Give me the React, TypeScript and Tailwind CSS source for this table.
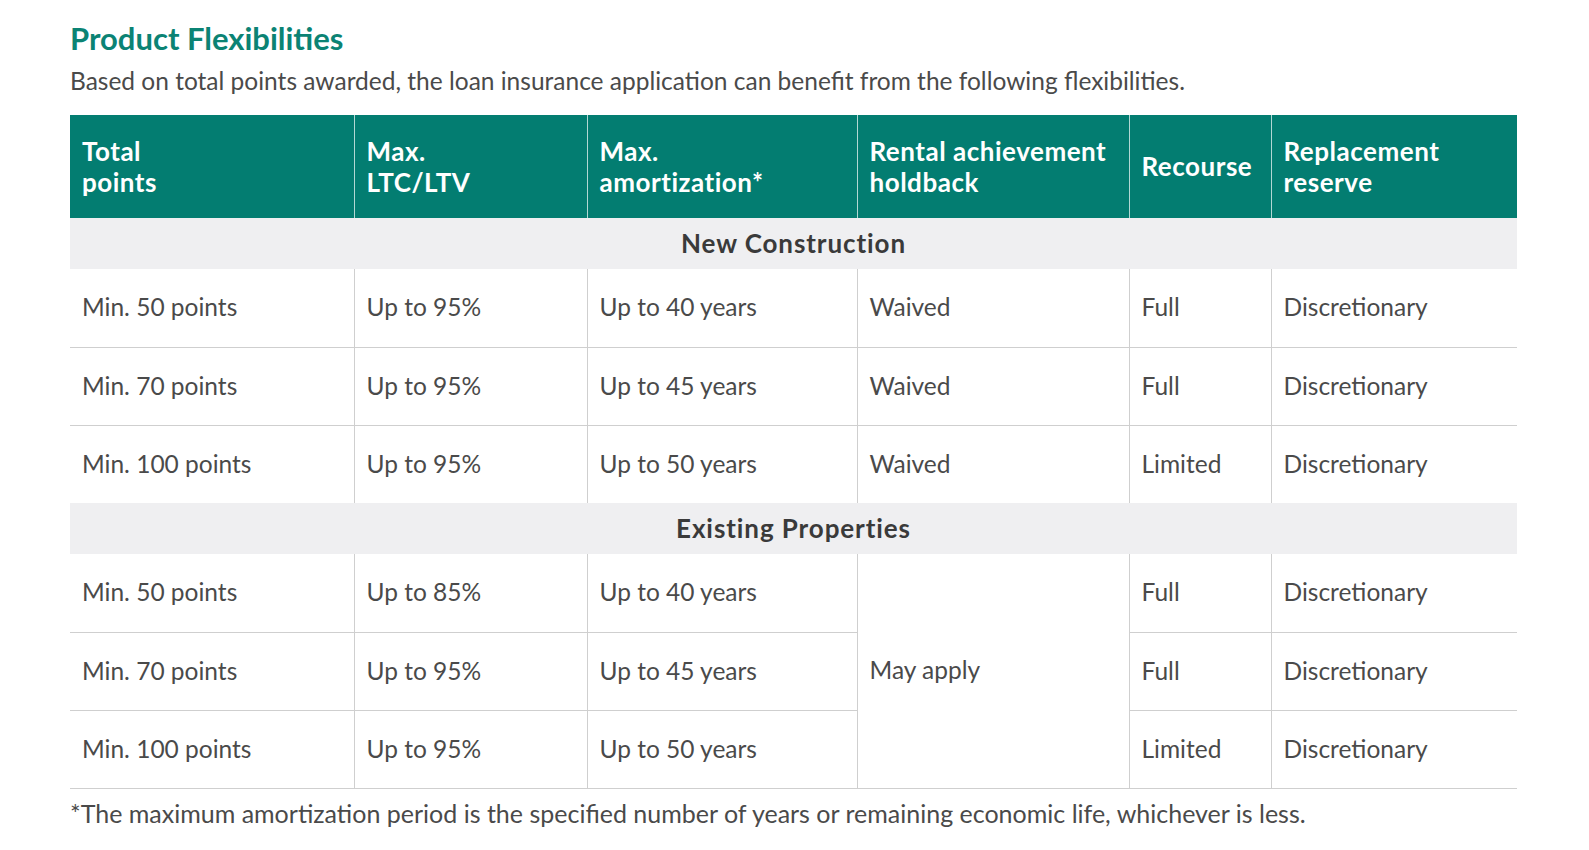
import React from 'react';

type Row = {
  points: string;
  ltv: string;
  amort: string;
  holdback?: string;
  recourse: string;
  reserve: string;
};

const newConstruction: Row[] = [
  { points: 'Min. 50 points', ltv: 'Up to 95%', amort: 'Up to 40 years', holdback: 'Waived', recourse: 'Full', reserve: 'Discretionary' },
  { points: 'Min. 70 points', ltv: 'Up to 95%', amort: 'Up to 45 years', holdback: 'Waived', recourse: 'Full', reserve: 'Discretionary' },
  { points: 'Min. 100 points', ltv: 'Up to 95%', amort: 'Up to 50 years', holdback: 'Waived', recourse: 'Limited', reserve: 'Discretionary' },
];

const existing: Row[] = [
  { points: 'Min. 50 points', ltv: 'Up to 85%', amort: 'Up to 40 years', recourse: 'Full', reserve: 'Discretionary' },
  { points: 'Min. 70 points', ltv: 'Up to 95%', amort: 'Up to 45 years', recourse: 'Full', reserve: 'Discretionary' },
  { points: 'Min. 100 points', ltv: 'Up to 95%', amort: 'Up to 50 years', recourse: 'Limited', reserve: 'Discretionary' },
];

const th = 'px-3 text-left align-middle font-bold text-white text-[26px] leading-[31px] tracking-[0.02em] border-l border-white/70 first:border-l-0';
const td = 'h-[78px] px-3 align-middle text-[24.5px] text-[#4a4a4a] border-l border-[#cfcfcf] first:border-l-0';

function SectionRow({ label }: { label: string }) {
  return (
    <tr className="bg-[#efeff1]">
      <td colSpan={6} className="h-[51px] text-center align-middle text-[26px] tracking-[0.035em] font-bold text-[#3a3a3a]">
        {label}
      </td>
    </tr>
  );
}

export default function App() {
  return (
    <div className="min-h-screen bg-white px-[70px] pt-[20px] font-['Lato',sans-serif]">
      <h1 className="text-[31px] leading-[37px] font-bold text-[#0b8374]">Product Flexibilities</h1>
      <p className="mt-[9px] text-[24.5px] leading-[30px] text-[#4a4a4a]">
        Based on total points awarded, the loan insurance application can benefit from the following flexibilities.
      </p>

      <table className="mt-[19px] w-[1447px] border-collapse table-fixed">
        <colgroup>
          <col className="w-[284px]" />
          <col className="w-[233px]" />
          <col className="w-[270px]" />
          <col className="w-[272px]" />
          <col className="w-[142px]" />
          <col className="w-[246px]" />
        </colgroup>
        <thead>
          <tr className="h-[103px] bg-[#037d71]">
            <th className={th}>Total<br />points</th>
            <th className={th}>Max.<br />LTC/LTV</th>
            <th className={th}>Max.<br />amortization*</th>
            <th className={th}>Rental achievement<br />holdback</th>
            <th className={th}>Recourse</th>
            <th className={th}>Replacement<br />reserve</th>
          </tr>
        </thead>
        <tbody>
          <SectionRow label="New Construction" />
          {newConstruction.map((r, i) => (
            <tr key={i} className={i > 0 ? 'border-t border-[#cfcfcf]' : ''}>
              <td className={td}>{r.points}</td>
              <td className={td}>{r.ltv}</td>
              <td className={td}>{r.amort}</td>
              <td className={td}>{r.holdback}</td>
              <td className={td}>{r.recourse}</td>
              <td className={td}>{r.reserve}</td>
            </tr>
          ))}
          <SectionRow label="Existing Properties" />
          {existing.map((r, i) => (
            <tr key={i} className={i > 0 ? 'border-t border-[#cfcfcf]' : ''}>
              <td className={td}>{r.points}</td>
              <td className={td}>{r.ltv}</td>
              <td className={td}>{r.amort}</td>
              {i === 0 && (
                <td rowSpan={3} className={td}>May apply</td>
              )}
              <td className={td}>{r.recourse}</td>
              <td className={td}>{r.reserve}</td>
            </tr>
          ))}
          <tr className="border-t border-[#cfcfcf]"><td colSpan={6} className="h-0 p-0" /></tr>
        </tbody>
      </table>

      <p className="mt-[9px] text-[25px] leading-[30px] text-[#4a4a4a]">
        *The maximum amortization period is the specified number of years or remaining economic life, whichever is less.
      </p>
    </div>
  );
}
